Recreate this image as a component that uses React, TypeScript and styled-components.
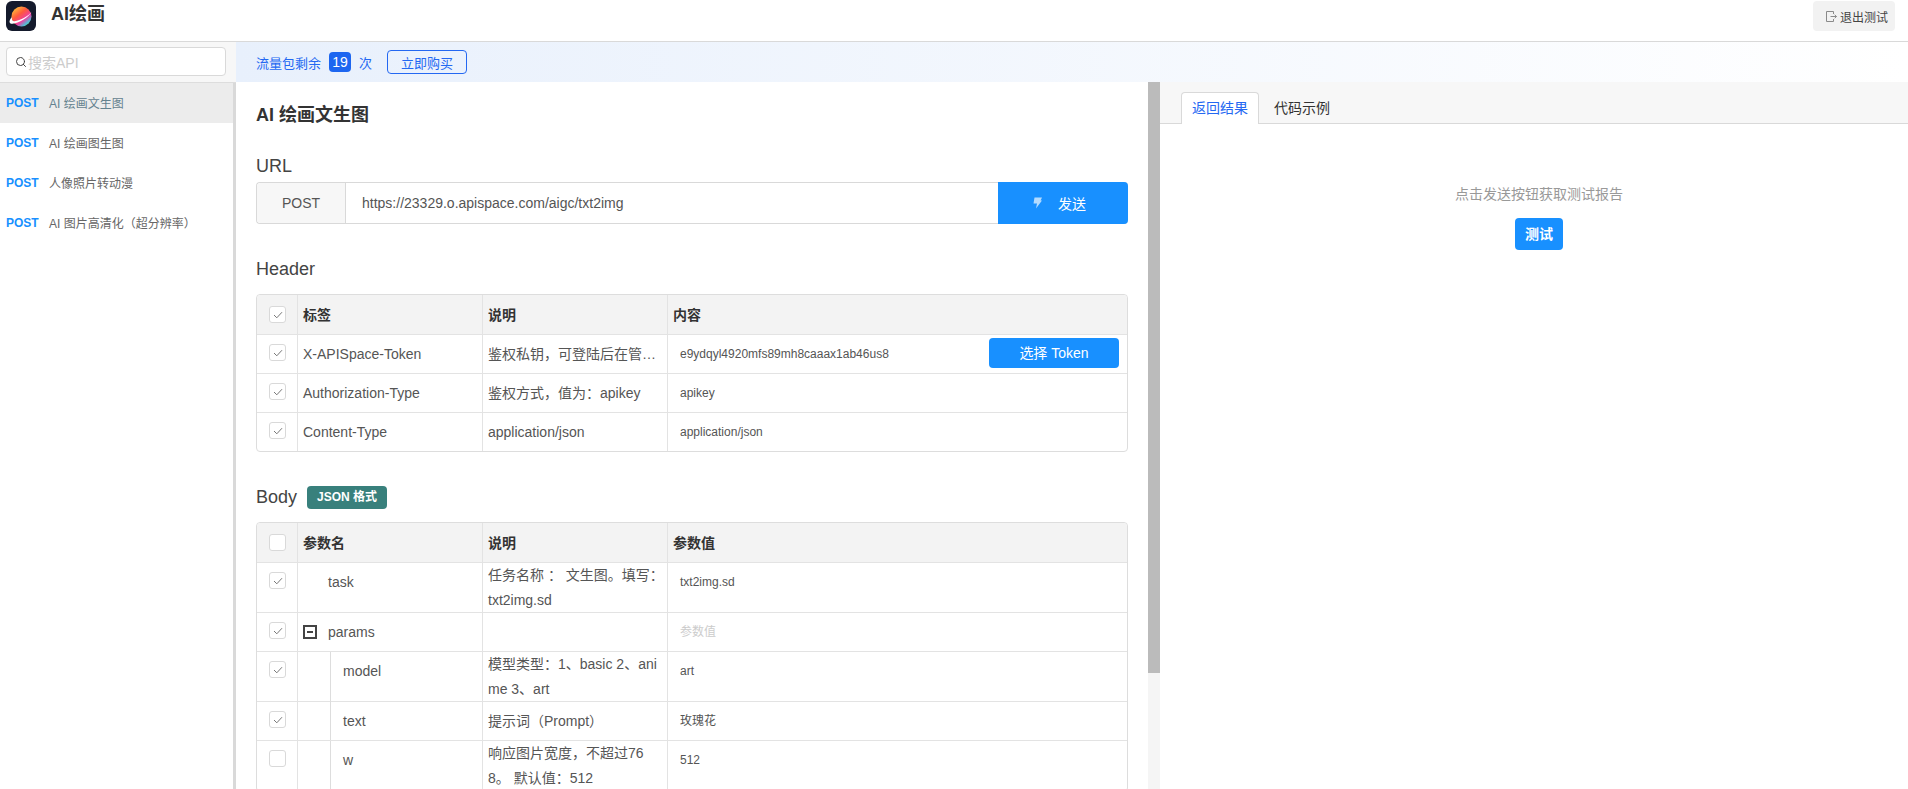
import * as React from 'react';
import styled, {createGlobalStyle} from 'styled-components';
import {Search} from 'lucide-react';

interface ParamRow {
    name: string;
    desc: string;
    value: string;
    checked: boolean;
    depth?: number;
    tall?: boolean;
    group?: boolean;
    placeholder?: boolean;
}

const API_LIST = ['AI 绘画文生图', 'AI 绘画图生图', '人像照片转动漫', 'AI 图片高清化（超分辨率）'];

const HEADER_ROWS = [
    {name: 'X-APISpace-Token', desc: '鉴权私钥，可登陆后在管…', value: 'e9ydqyl4920mfs89mh8caaax1ab46us8', token: true},
    {name: 'Authorization-Type', desc: '鉴权方式，值为：apikey', value: 'apikey', token: false},
    {name: 'Content-Type', desc: 'application/json', value: 'application/json', token: false},
];

const BODY_ROWS: ParamRow[] = [
    {name: 'task', desc: '任务名称 ： 文生图。填写： txt2img.sd', value: 'txt2img.sd', checked: true, tall: true},
    {name: 'params', desc: '', value: '参数值', checked: true, group: true, placeholder: true},
    {name: 'model', desc: '模型类型：1、basic 2、anime 3、art', value: 'art', checked: true, depth: 1, tall: true},
    {name: 'text', desc: '提示词（Prompt）', value: '玫瑰花', checked: true, depth: 1},
    {name: 'w', desc: '响应图片宽度，不超过768。 默认值：512', value: '512', checked: false, depth: 1, tall: true},
];

const GlobalStyle = createGlobalStyle`
    html, body {
        margin: 0;
        height: 100%;
        overflow: hidden;
        background: #fff;
        font-family: "Liberation Sans", "Noto Sans CJK SC", sans-serif;
        color: #555;
    }

    * {
        box-sizing: border-box;
    }
`;

const Page = styled.div`
    display: flex;
    flex-direction: column;
    height: 100vh;
`;

const TopBar = styled.header`
    display: flex;
    align-items: flex-start;
    flex: none;
    height: 42px;
    padding: 1px 13px 0 6px;
    border-bottom: 1px solid #d9d9d9;
`;

const AppTitle = styled.h1`
    margin: 0 0 0 15px;
    font-size: 18px;
    line-height: 27px;
    font-weight: bold;
    color: #333;
`;

const ExitButton = styled.button`
    display: flex;
    align-items: center;
    gap: 3px;
    height: 30px;
    margin-left: auto;
    padding: 0 7px 0 12px;
    border: none;
    border-radius: 4px;
    background: #f2f2f2;
    font: inherit;
    font-size: 12px;
    color: #444;
`;

const Layout = styled.div`
    display: flex;
    flex: 1;
    min-height: 0;
`;

const Sidebar = styled.aside`
    display: flex;
    flex-direction: column;
    flex: none;
    width: 236px;
`;

const SearchRow = styled.div`
    flex: none;
    height: 41px;
    padding: 5px 10px 0 6px;
    background: #f7f7f7;
    border-bottom: 1px solid #ddd;
`;

const SearchBox = styled.div`
    display: flex;
    align-items: center;
    gap: 1px;
    height: 29px;
    padding-left: 8px;
    border: 1px solid #d9d9d9;
    border-radius: 4px;
    background: #fff;
    font-size: 14px;
    color: #ccc;

    svg {
        color: #444;
    }
`;

const ApiList = styled.ul`
    flex: 1;
    margin: 0;
    padding: 0;
    list-style: none;
    border-right: 3px solid #d9d9d9;
`;

const ApiItem = styled.li<{$active?: boolean}>`
    display: flex;
    align-items: center;
    height: 40px;
    padding: 0 0 1px 6px;
    font-size: 12px;
    background: ${props => (props.$active ? '#ececec' : '#fff')};
    color: ${props => (props.$active ? '#64828f' : '#666')};
`;

const Method = styled.span`
    flex: none;
    width: 43px;
    font-weight: bold;
    color: #1890ff;
`;

const Content = styled.div`
    display: flex;
    flex-direction: column;
    flex: 1;
    min-width: 0;
`;

const NoticeBar = styled.div`
    display: flex;
    align-items: center;
    flex: none;
    height: 40px;
    padding-left: 20px;
    background: linear-gradient(90deg, #e8f0fc, #fff);
    font-size: 13px;
    color: #2468f2;
`;

const CountBadge = styled.span`
    display: flex;
    align-items: center;
    justify-content: center;
    width: 22px;
    height: 20px;
    margin: 0 8px 0 8px;
    border-radius: 4px;
    background: #1d66f0;
    font-size: 14px;
    color: #fff;
`;

const BuyButton = styled.button`
    width: 80px;
    height: 24px;
    margin-left: 15px;
    padding: 0;
    border: 1px solid #2468f2;
    border-radius: 4px;
    background: transparent;
    font: inherit;
    color: #2468f2;
`;

const Panels = styled.div`
    display: flex;
    flex: 1;
    min-height: 0;
`;

const MainArea = styled.div`
    display: flex;
    flex: none;
    width: 924px;
    height: 100%;
`;

const MainPanel = styled.main`
    flex: 1;
    min-width: 0;
    height: 100%;
    overflow-y: scroll;
    scrollbar-width: none;
    padding: 20px 20px 137px;
`;

const ScrollRail = styled.div`
    flex: none;
    width: 12px;
    background: #f5f5f5;
`;

const ScrollThumb = styled.div`
    height: 591px;
    background: #bbb;
`;

const PageTitle = styled.h2`
    margin: 0 0 25px;
    font-size: 18px;
    line-height: 26px;
    font-weight: bold;
    color: #333;
`;

const SectionHead = styled.div<{$tight?: boolean}>`
    display: flex;
    align-items: center;
    gap: 10px;
    height: 26px;
    margin-bottom: ${props => (props.$tight ? '3px' : '12px')};
    font-size: 18px;
    color: #444;
`;

const FormatTag = styled.span`
    padding: 0 10px;
    height: 23px;
    border-radius: 4px;
    background: #38807c;
    font-size: 12px;
    line-height: 23px;
    font-weight: bold;
    color: #fff;
`;

const UrlGroup = styled.div`
    display: flex;
    height: 42px;
    margin-bottom: 32px;
    border: 1px solid #d9d9d9;
    border-right: none;
    border-radius: 4px;
    font-size: 14px;
`;

const UrlMethod = styled.div`
    display: flex;
    align-items: center;
    justify-content: center;
    flex: none;
    width: 89px;
    border-right: 1px solid #d9d9d9;
    border-radius: 4px 0 0 4px;
    background: #f7f7f7;
`;

const UrlText = styled.div`
    display: flex;
    align-items: center;
    flex: 1;
    padding-left: 16px;
`;

const SendButton = styled.button`
    display: flex;
    align-items: center;
    gap: 16px;
    flex: none;
    width: 130px;
    margin: -1px 0;
    padding: 0 0 0 35px;
    border: none;
    border-radius: 0 4px 4px 0;
    background: #1890ff;
    font: inherit;
    color: #fff;
`;

const ParamTable = styled.div<{$spaced?: boolean}>`
    margin-bottom: ${props => (props.$spaced ? '32px' : '0')};
    border: 1px solid #ddd;
    border-radius: 4px;
    font-size: 14px;
`;

const TableRow = styled.div<{$height: number; $head?: boolean; $last?: boolean}>`
    display: grid;
    grid-template-columns: 40px 185px 185px 1fr;
    height: ${props => props.$height}px;
    background: ${props => (props.$head ? '#f3f3f3' : 'transparent')};
    border-bottom: ${props => (props.$last ? 'none' : '1px solid #e3e3e3')};
    border-radius: ${props => (props.$head ? '4px 4px 0 0' : '0')};
`;

const CheckCell = styled.div<{$head?: boolean}>`
    display: flex;
    justify-content: center;
    align-items: ${props => (props.$head ? 'center' : 'flex-start')};
    padding-top: ${props => (props.$head ? '0' : '9px')};
`;

const Checkbox = styled.span`
    display: flex;
    align-items: center;
    justify-content: center;
    width: 17px;
    height: 17px;
    margin-left: 1px;
    border: 1px solid #d9d9d9;
    border-radius: 3px;
    background: #fff;
`;

const HeadCell = styled.div`
    display: flex;
    align-items: center;
    padding: 0 0 2px 5px;
    border-left: 1px solid #e3e3e3;
    font-weight: bold;
    color: #333;
`;

const NameCell = styled.div`
    display: flex;
    padding-left: 5px;
    border-left: 1px solid #e3e3e3;
    line-height: 38px;
    white-space: nowrap;
`;

const ToggleSlot = styled.span`
    display: flex;
    align-items: center;
    flex: none;
    width: 25px;
    height: 38px;
`;

const MinusBox = styled.span`
    display: flex;
    align-items: center;
    justify-content: center;
    width: 14px;
    height: 14px;
    border: 2px solid #444;

    &::after {
        content: '';
        width: 6px;
        height: 2px;
        background: #444;
    }
`;

const NestLine = styled.span`
    flex: none;
    width: 28px;
    margin-right: 12px;
    border-right: 1px solid #ddd;
`;

const DescCell = styled.div<{$wrap?: boolean}>`
    display: flex;
    align-items: center;
    min-width: 0;
    padding: 0 2px 0 5px;
    border-left: 1px solid #e3e3e3;
    line-height: ${props => (props.$wrap ? '25px' : '38px')};
    word-break: break-all;
`;

const ValueCell = styled.div<{$muted?: boolean}>`
    display: flex;
    align-items: flex-start;
    justify-content: space-between;
    padding: 0 8px 0 12px;
    border-left: 1px solid #e3e3e3;
    font-size: 12px;
    line-height: 38px;
    color: ${props => (props.$muted ? '#ccc' : '#555')};
`;

const TokenButton = styled.button`
    width: 130px;
    height: 30px;
    margin-top: 3px;
    padding: 0;
    border: none;
    border-radius: 4px;
    background: #1890ff;
    font: inherit;
    font-size: 14px;
    line-height: 30px;
    color: #fff;
`;

const ResultPanel = styled.section`
    display: flex;
    flex-direction: column;
    flex: 1;
    min-width: 0;
`;

const TabBar = styled.div`
    display: flex;
    align-items: flex-end;
    gap: 4px;
    flex: none;
    height: 42px;
    padding-left: 21px;
    background: #f7f7f7;
    border-bottom: 1px solid #d9d9d9;
`;

const Tab = styled.div<{$active?: boolean}>`
    width: 78px;
    height: ${props => (props.$active ? '32px' : '31px')};
    margin-bottom: ${props => (props.$active ? '-1px' : '0')};
    border: 1px solid ${props => (props.$active ? '#d9d9d9' : 'transparent')};
    border-bottom: none;
    border-radius: 4px 4px 0 0;
    background: ${props => (props.$active ? '#fff' : 'transparent')};
    font-size: 14px;
    line-height: 30px;
    text-align: center;
    color: ${props => (props.$active ? '#2468f2' : '#333')};
`;

const EmptyResult = styled.div`
    display: flex;
    flex-direction: column;
    align-items: center;
    padding: 60px 0 0 10px;
    font-size: 14px;
    line-height: 20px;
    color: #999;
`;

const TestButton = styled.button`
    width: 48px;
    height: 32px;
    margin-top: 14px;
    padding: 0;
    border: none;
    border-radius: 4px;
    background: #1890ff;
    font: inherit;
    font-weight: bold;
    color: #fff;
`;

const Logo: React.FC = () => (
    <svg width="30" height="30" viewBox="0 0 30 30">
        <defs>
            <linearGradient id="planet" x1="0.1" y1="0.1" x2="0.8" y2="1">
                <stop offset="0" stopColor="#ffc23a" />
                <stop offset="0.36" stopColor="#ff5a3c" />
                <stop offset="0.66" stopColor="#ee3fa2" />
                <stop offset="0.86" stopColor="#54b8d8" />
                <stop offset="1" stopColor="#5fe07a" />
            </linearGradient>
        </defs>
        <rect width="30" height="30" rx="6" fill="#141a2c" />
        <circle cx="15.5" cy="15.5" r="10" fill="url(#planet)" />
        <path d="M6 16C2.6 19.6 2.6 23 6.6 22.8C12.6 22.4 22.6 16.6 25.8 10.6C23.2 14.8 14 19.8 8.6 20.2C6.4 20.4 5.6 18.6 6 16Z" fill="#fff" />
    </svg>
);

const ExitIcon: React.FC = () => (
    <svg width="12" height="13" viewBox="0 0 12 13" fill="none" stroke="#8a8a8a" strokeWidth="1">
        <path d="M8.5 4V1.5H1.5V11.5H8.5V9" />
        <path d="M5.5 6.5H11.5M9.7 4.8L11.5 6.5L9.7 8.2" />
    </svg>
);

const BoltIcon: React.FC = () => (
    <svg width="9" height="12" viewBox="0 0 9 12">
        <path d="M1.5 0.5H9L7.6 3.6H9L3 11.5L4 6.5H0.5Z" fill="#b4dbff" />
    </svg>
);

const CheckBox: React.FC<{checked: boolean}> = ({checked}) => (
    <Checkbox>
        {checked && (
            <svg width="10" height="8" viewBox="0 0 10 8" fill="none" stroke="#777" strokeWidth="1">
                <path d="M1 4L3.8 6.8L9 1.2" />
            </svg>
        )}
    </Checkbox>
);

const TableHead: React.FC<{labels: string[]; checked: boolean}> = ({labels, checked}) => (
    <TableRow $height={40} $head>
        <CheckCell $head>
            <CheckBox checked={checked} />
        </CheckCell>
        {labels.map(label => (
            <HeadCell key={label}>{label}</HeadCell>
        ))}
    </TableRow>
);

const BodyRow: React.FC<{row: ParamRow}> = ({row}) => (
    <TableRow $height={row.tall ? 50 : 39}>
        <CheckCell>
            <CheckBox checked={row.checked} />
        </CheckCell>
        <NameCell>
            {row.depth ? <NestLine /> : <ToggleSlot>{row.group && <MinusBox />}</ToggleSlot>}
            {row.name}
        </NameCell>
        <DescCell $wrap={row.tall}>
            <span>{row.desc}</span>
        </DescCell>
        <ValueCell $muted={row.placeholder}>{row.value}</ValueCell>
    </TableRow>
);

const App: React.FC = () => {
    return (
        <Page>
            <GlobalStyle />
            <TopBar>
                <Logo />
                <AppTitle>AI绘画</AppTitle>
                <ExitButton>
                    <ExitIcon />
                    退出测试
                </ExitButton>
            </TopBar>
            <Layout>
                <Sidebar>
                    <SearchRow>
                        <SearchBox>
                            <Search size={12} strokeWidth={2} />
                            搜索API
                        </SearchBox>
                    </SearchRow>
                    <ApiList>
                        {API_LIST.map((name, index) => (
                            <ApiItem key={name} $active={index === 0}>
                                <Method>POST</Method>
                                {name}
                            </ApiItem>
                        ))}
                    </ApiList>
                </Sidebar>
                <Content>
                    <NoticeBar>
                        流量包剩余
                        <CountBadge>19</CountBadge>
                        次
                        <BuyButton>立即购买</BuyButton>
                    </NoticeBar>
                    <Panels>
                        <MainArea>
                            <MainPanel>
                                <PageTitle>AI 绘画文生图</PageTitle>
                                <SectionHead $tight>URL</SectionHead>
                                <UrlGroup>
                                    <UrlMethod>POST</UrlMethod>
                                    <UrlText>https://23329.o.apispace.com/aigc/txt2img</UrlText>
                                    <SendButton>
                                        <BoltIcon />
                                        发送
                                    </SendButton>
                                </UrlGroup>
                                <SectionHead>Header</SectionHead>
                                <ParamTable $spaced>
                                    <TableHead labels={['标签', '说明', '内容']} checked />
                                    {HEADER_ROWS.map((row, index) => {
                                        const last = index === HEADER_ROWS.length - 1;
                                        return (
                                            <TableRow key={row.name} $height={last ? 38 : 39} $last={last}>
                                                <CheckCell>
                                                    <CheckBox checked />
                                                </CheckCell>
                                                <NameCell>{row.name}</NameCell>
                                                <DescCell>
                                                    <span>{row.desc}</span>
                                                </DescCell>
                                                <ValueCell>
                                                    {row.value}
                                                    {row.token && <TokenButton>选择 Token</TokenButton>}
                                                </ValueCell>
                                            </TableRow>
                                        );
                                    })}
                                </ParamTable>
                                <SectionHead>
                                    Body
                                    <FormatTag>JSON 格式</FormatTag>
                                </SectionHead>
                                <ParamTable>
                                    <TableHead labels={['参数名', '说明', '参数值']} checked={false} />
                                    {BODY_ROWS.map(row => (
                                        <BodyRow key={row.name} row={row} />
                                    ))}
                                </ParamTable>
                            </MainPanel>
                            <ScrollRail>
                                <ScrollThumb />
                            </ScrollRail>
                        </MainArea>
                        <ResultPanel>
                            <TabBar>
                                <Tab $active>返回结果</Tab>
                                <Tab>代码示例</Tab>
                            </TabBar>
                            <EmptyResult>
                                点击发送按钮获取测试报告
                                <TestButton>测试</TestButton>
                            </EmptyResult>
                        </ResultPanel>
                    </Panels>
                </Content>
            </Layout>
        </Page>
    );
};

export default App;
